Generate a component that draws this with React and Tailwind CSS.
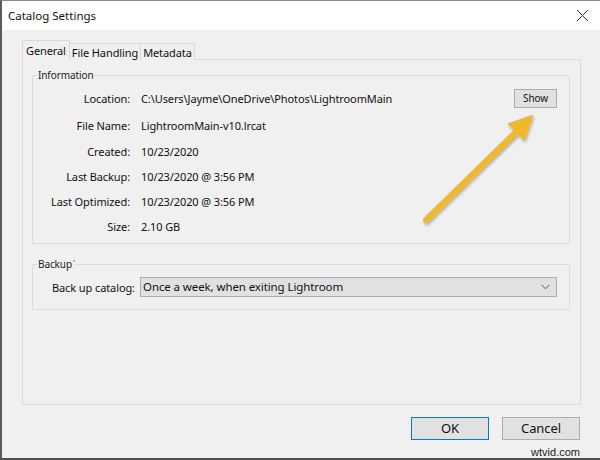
import React from "react";

const font = { fontFamily: '"Noto Sans", "Open Sans", Arial, sans-serif' };

function Row({ label, value, h, children }) {
  return (
    <div className="flex items-center" style={{ height: h }}>
      <div className="w-[97px] flex-none text-right">{label}</div>
      <div className="ml-[11px] whitespace-nowrap">{value}</div>
      {children}
    </div>
  );
}

export default function App() {
  return (
    <div
      className="relative w-[600px] h-[460px] overflow-hidden bg-[#f0f0f0] border-t border-l-2 border-b-2 border-t-[#8a8a8a] border-l-[#5c5c5c] border-b-[#4d4d4d] text-[11px] tracking-[-0.1px] text-[#111] leading-none"
      style={font}
    >
      {/* title bar */}
      <div className="h-[29px] bg-white flex items-center justify-between pl-[6px] pr-[10px]">
        <span className="text-[11.5px] tracking-normal text-[#111]">Catalog Settings</span>
        <svg width="13" height="13" viewBox="0 0 13 13" className="mr-[1px]">
          <path d="M1 1 L12 12 M12 1 L1 12" stroke="#333" strokeWidth="1" fill="none" />
        </svg>
      </div>

      {/* body */}
      <div className="pl-[20px] pr-[19px] pt-[10px]">
        {/* tabs */}
        <div className="flex items-end h-[20px] relative z-10">
          <div className="h-[20px] px-[3px] flex items-center bg-[#f0f0f0] border border-[#d9d9d9] border-b-[#f0f0f0]">
            General
          </div>
          <div className="h-[17px] px-[2px] flex items-center bg-[#f0f0f0] border border-l-0 border-b-0 border-[#d9d9d9]">
            File Handling
          </div>
          <div className="h-[17px] px-[2px] flex items-center bg-[#f0f0f0] border border-l-0 border-b-0 border-[#d9d9d9]">
            Metadata
          </div>
        </div>

        {/* panel */}
        <div className="-mt-px h-[346px] border border-[#d9d9d9] bg-[#f0f0f0] pt-[8px] pl-[9px] pr-[10px]">
          <fieldset className="border border-[#dcdcdc] rounded-[1px] pt-[2px] h-[176px]">
            <legend className="ml-[4px] px-[1px] text-[10px] leading-[14px] text-[#222]">Information</legend>
            <Row label="Location:" value={"C:\\Users\\Jayme\\OneDrive\\Photos\\LightroomMain"} h={28}>
              <div className="ml-auto mr-[12px] w-[43px] h-[19px] flex items-center justify-center bg-[#e1e1e1] border border-[#adadad] text-[10px]">
                Show
              </div>
            </Row>
            <Row label="File Name:" value="LightroomMain-v10.lrcat" h={27} />
            <Row label="Created:" value="10/23/2020" h={25} />
            <Row label="Last Backup:" value="10/23/2020 @ 3:56 PM" h={25} />
            <Row label="Last Optimized:" value="10/23/2020 @ 3:56 PM" h={25} />
            <Row label="Size:" value="2.10 GB" h={25} />
          </fieldset>

          <fieldset className="mt-[13px] border border-[#dcdcdc] rounded-[1px] pt-[6px] pb-[12px]">
            <legend className="ml-[4px] px-[1px] text-[10px] leading-[14px] text-[#222]">
              Backup<sup className="text-[7px] ml-px">'</sup>
            </legend>
            <div className="flex items-center">
              <div className="pl-[19px] w-[106px] flex-none whitespace-nowrap">Back up catalog:</div>
              <div className="ml-px mr-[12px] flex-1 h-[20px] flex items-center justify-between bg-[#e1e1e1] border border-[#adadad] pl-[2px] pr-[6px] text-[11.5px]">
                <span>Once a week, when exiting Lightroom</span>
                <svg width="9" height="6" viewBox="0 0 9 6">
                  <path d="M0.5 0.8 L4.5 4.8 L8.5 0.8" stroke="#555" strokeWidth="1" fill="none" />
                </svg>
              </div>
            </div>
          </fieldset>
        </div>

        {/* buttons */}
        <div className="flex justify-end gap-[13px] mt-[12px] pr-px">
          <div className="w-[78px] h-[23px] flex items-center justify-center bg-[#e1e1e1] border border-[#0078d7] text-[13px]">
            OK
          </div>
          <div className="w-[78px] h-[23px] flex items-center justify-center bg-[#e1e1e1] border border-[#adadad] text-[13px]">
            Cancel
          </div>
        </div>
        <div className="flex justify-end pr-[1px] mt-[7px]">
          <span className="text-[11px] tracking-normal text-[#222]" style={{ fontFamily: '"Liberation Sans", Arial, sans-serif' }}>
            wtvid.com
          </span>
        </div>
      </div>

      {/* annotation arrow */}
      <svg className="absolute left-0 top-0 pointer-events-none" width="600" height="460" viewBox="-2 -1 600 460">
        <defs>
          <filter id="sh" x="-20%" y="-20%" width="140%" height="140%">
            <feDropShadow dx="1" dy="2" stdDeviation="1.5" floodColor="#000" floodOpacity="0.3" />
          </filter>
        </defs>
        <g filter="url(#sh)">
          <line x1="422" y1="218" x2="514" y2="128" stroke="#f0b92b" strokeWidth="6" strokeLinecap="round" />
          <polygon points="528,114 520,137 505,122" fill="#f0b92b" stroke="#f0b92b" strokeWidth="2" strokeLinejoin="round" />
        </g>
      </svg>
    </div>
  );
}
